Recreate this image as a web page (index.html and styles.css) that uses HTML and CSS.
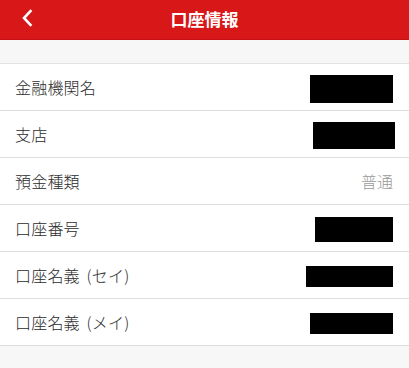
FILE: index.html
```html
<!DOCTYPE html>
<html lang="ja">
<head>
<meta charset="utf-8">
<link rel="stylesheet" href="styles.css">
</head>
<body>
<div class="page">
  <header class="header">
    <span class="back">
      <svg width="12" height="18" viewBox="0 0 12 18"><path d="M9.5 2 L3 9 L9.5 16" fill="none" stroke="#fff" stroke-width="2.6" stroke-linecap="square" stroke-linejoin="miter"/></svg>
    </span>
    <h1 class="title">口座情報</h1>
  </header>
  <div class="spacer"></div>
  <ul class="list">
    <li class="row"><span class="label">金融機関名</span><span class="mask mask-1"></span></li>
    <li class="row"><span class="label">支店</span><span class="mask mask-2"></span></li>
    <li class="row"><span class="label">預金種類</span><span class="value">普通</span></li>
    <li class="row"><span class="label">口座番号</span><span class="mask mask-4"></span></li>
    <li class="row"><span class="label">口座名義 (セイ)</span><span class="mask mask-5"></span></li>
    <li class="row"><span class="label">口座名義 (メイ)</span><span class="mask mask-6"></span></li>
  </ul>
</div>
</body>
</html>
```

FILE: styles.css
```css
html, body {
  margin: 0;
  padding: 0;
  background: #f7f7f7;
  font-family: "Noto Sans CJK JP", "Noto Sans", sans-serif;
}
.page {
  width: 409px;
  min-height: 368px;
  background: #f7f7f7;
}
.header {
  position: relative;
  height: 40px;
  background: #d71718;
  border-bottom: 1px solid #c51214;
  box-sizing: border-box;
  display: flex;
  align-items: center;
  justify-content: center;
}
.back {
  position: absolute;
  left: 21px;
  top: 9px;
  width: 12px;
  height: 18px;
  display: flex;
}
.title {
  margin: 0;
  color: #fff;
  font-size: 17px;
  font-weight: 700;
  line-height: 1;
  padding-bottom: 2px;
}
.spacer {
  height: 23px;
}
.list {
  list-style: none;
  margin: 0;
  padding: 0;
  background: #fff;
  border-top: 1px solid #e3e3e3;
}
.row {
  height: 46px;
  border-bottom: 1px solid #dedede;
  display: flex;
  align-items: center;
  justify-content: space-between;
  padding: 0 16px 0 15px;
}
.label {
  font-size: 16px;
  font-weight: 300;
  color: #2b2b2b;
  line-height: 1;
  letter-spacing: 0.2px;
  word-spacing: 3px;
}
.value {
  font-size: 16px;
  font-weight: 300;
  color: #9a9a9a;
  line-height: 1;
}
.mask {
  display: block;
  background: #000;
  margin-top: 3px;
}
.mask-1 { width: 83px; height: 28px; }
.mask-2 { width: 82px; height: 27px; margin-right: -2px; }
.mask-4 { width: 78px; height: 25px; }
.mask-5 { width: 87px; height: 21px; }
.mask-6 { width: 83px; height: 21px; }
```
